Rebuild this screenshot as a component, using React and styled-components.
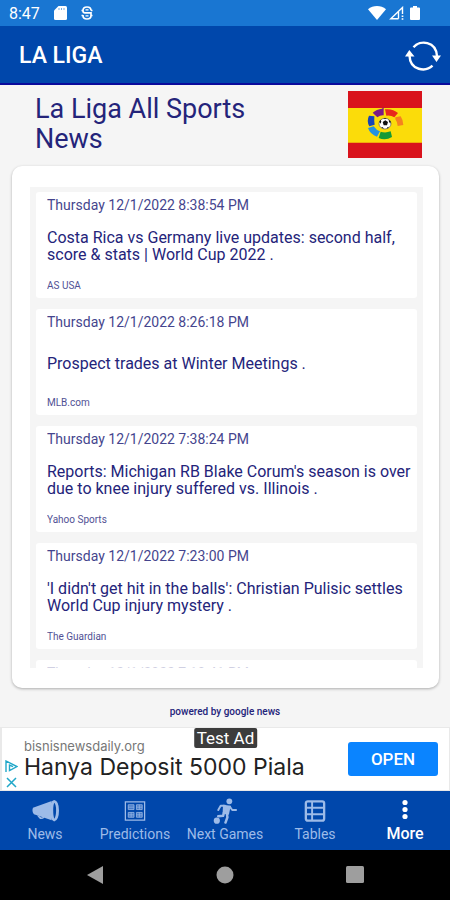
import React from "react"
import styled, { createGlobalStyle } from "styled-components"

const colors = {
  status: "#1976d2",
  primary: "#0047ab",
  primaryDark: "#0a0a9c",
  navy: "#24247a",
  page: "#f5f5f5",
  open: "#0a84ff",
  navIdle: "#9dbbe8",
}

const articles = [
  {
    date: "Thursday 12/1/2022 8:38:54 PM",
    title: "Costa Rica vs Germany live updates: second half, score & stats | World Cup 2022 .",
    source: "AS USA",
  },
  {
    date: "Thursday 12/1/2022 8:26:18 PM",
    title: "Prospect trades at Winter Meetings .",
    source: "MLB.com",
  },
  {
    date: "Thursday 12/1/2022 7:38:24 PM",
    title: "Reports: Michigan RB Blake Corum's season is over due to knee injury suffered vs. Illinois .",
    source: "Yahoo Sports",
  },
  {
    date: "Thursday 12/1/2022 7:23:00 PM",
    title: "'I didn't get hit in the balls': Christian Pulisic settles World Cup injury mystery .",
    source: "The Guardian",
  },
  {
    date: "Thursday 12/1/2022 7:10:41 PM",
    title: "",
    source: "",
  },
]

const GlobalStyle = createGlobalStyle`
  *,
  *::before,
  *::after {
    box-sizing: border-box;
  }

  body {
    margin: 0;
    background: ${colors.page};
    font-family: Roboto, "Liberation Sans", sans-serif;
  }
`

const Screen = styled.div`
  display: flex;
  flex-direction: column;
  height: 100vh;
  color: ${colors.navy};
  background: ${colors.page};
`

const StatusBar = styled.div`
  display: flex;
  align-items: center;
  justify-content: space-between;
  height: 26px;
  padding: 0 30px 0 9px;
  color: #fff;
  background: ${colors.status};
  font-size: 16px;
`

const StatusGroup = styled.div`
  display: flex;
  align-items: center;
  gap: ${props => props.$gap}px;
`

const Header = styled.header`
  display: flex;
  align-items: center;
  justify-content: space-between;
  height: 59px;
  padding: 2px 9px 0 19px;
  color: #fff;
  background: ${colors.primary};
  border-bottom: 2px solid ${colors.primaryDark};
`

const AppName = styled.h1`
  margin: 0;
  font-size: 23px;
  font-weight: 500;
`

const IconButton = styled.button`
  display: flex;
  padding: 0;
  border: 0;
  color: inherit;
  background: none;
`

const Main = styled.main`
  display: flex;
  flex: 1;
  flex-direction: column;
  min-height: 0;
`

const Intro = styled.section`
  display: flex;
  align-items: flex-start;
  justify-content: space-between;
  gap: 24px;
  padding: 6px 28px 8px 35px;
`

const Heading = styled.h2`
  max-width: 250px;
  margin: 3px 0 0;
  font-size: 27px;
  font-weight: 400;
  line-height: 30px;
`

const Card = styled.section`
  display: flex;
  flex: 1;
  min-height: 0;
  margin: 0 11px 0 12px;
  padding: 21px 16px 20px 18px;
  border-radius: 10px;
  background: #fff;
  box-shadow: 0 1px 3px rgba(0, 0, 0, 0.3);
`

const ListFrame = styled.div`
  position: relative;
  flex: 1;
  overflow: hidden;
  background: ${colors.page};

  &::after {
    position: absolute;
    right: 6px;
    bottom: 0;
    left: 6px;
    height: 8px;
    background: linear-gradient(rgba(255, 255, 255, 0), rgba(255, 255, 255, 0.8));
    content: "";
  }
`

const List = styled.ul`
  display: flex;
  flex-direction: column;
  gap: 11px;
  margin: 0;
  padding: 5px 6px;
  list-style: none;
`

const Article = styled.li`
  display: flex;
  flex-direction: column;
  flex-shrink: 0;
  height: 106px;
  padding: 5px 6px 5px 11px;
  border-radius: 3px;
  background: #fff;
`

const ArticleDate = styled.time`
  font-size: 14px;
  line-height: 16px;
  opacity: 0.85;
`

const ArticleTitle = styled.h3`
  display: flex;
  flex: 1;
  align-items: center;
  margin: 0;
  font-size: 16px;
  font-weight: 400;
  line-height: 17px;
`

const ArticleSource = styled.span`
  font-size: 10px;
  line-height: 14px;
  opacity: 0.8;
`

const Powered = styled.p`
  margin: 0;
  padding: 18px 0 9px;
  font-size: 10px;
  font-weight: 500;
  line-height: 12px;
  text-align: center;
`

const Ad = styled.aside`
  position: relative;
  display: flex;
  align-items: center;
  height: 64px;
  padding: 0 11px 0 3px;
  border: solid #e9e9e9;
  border-width: 1px 1px 1px 2px;
  background: #fff;
`

const AdMarks = styled.div`
  display: flex;
  flex-direction: column;
  align-self: flex-end;
  gap: 4px;
  margin-right: 6px;
  padding-bottom: 2px;
`

const AdCopy = styled.div`
  flex: 1;
  font-family: Inter, Lato, sans-serif;
  white-space: nowrap;
`

const AdSite = styled.div`
  color: #777;
  font-size: 13px;
  line-height: 16px;
`

const AdTitle = styled.div`
  color: #222;
  font-size: 23px;
  line-height: 26px;
`

const TestBadge = styled.span`
  position: absolute;
  top: 0;
  left: 50%;
  padding: 0 3px;
  border-radius: 2px;
  color: #fff;
  background: #3c3c3c;
  font-size: 17px;
  line-height: 20px;
  transform: translateX(-50%);
`

const OpenButton = styled.button`
  width: 90px;
  height: 34px;
  padding: 0;
  border: 0;
  border-radius: 3px;
  color: #fff;
  background: ${colors.open};
  font-family: inherit;
  font-size: 17px;
  font-weight: 500;
`

const TabBar = styled.nav`
  display: grid;
  grid-template-columns: repeat(5, 1fr);
  height: 59px;
  background: ${colors.primary};
`

const Tab = styled.a`
  display: flex;
  flex-direction: column;
  align-items: center;
  gap: 2px;
  padding-top: 7px;
  color: ${props => (props.$active ? "#fff" : colors.navIdle)};
  font-size: ${props => (props.$active ? 16 : 14)}px;
  font-weight: ${props => (props.$active ? 500 : 400)};
  line-height: 16px;
  text-decoration: none;
  white-space: nowrap;
`

const SystemBar = styled.div`
  display: grid;
  grid-template-columns: repeat(3, 130px);
  align-items: center;
  justify-content: center;
  justify-items: center;
  height: 50px;
  color: #9e9e9e;
  background: #000;
`

const SdCardIcon = () => (
  <svg width="13" height="14" viewBox="0 0 13 14" fill="currentColor">
    <path d="M4.5 0H11.5Q13 0 13 1.5V12.5Q13 14 11.5 14H1.5Q0 14 0 12.500V4.500Z" />
    <path d="M5 2v2M7.500 2v2M10 2v2" stroke={colors.status} strokeWidth="0.600" />
  </svg>
)

const DebugIcon = () => (
  <svg width="12" height="14" viewBox="0 0 12 14" fill="none" stroke="currentColor">
    <path
      d="M10 4.500C10 2 8.500 1 6 1S2 2 2 4.500V5Q2 6.800 4 6.800H10V9.500C10 12 8.500 13 6 13S2 12 2 9.500V9"
      strokeWidth="1.700"
    />
    <path d="M0.500 9.500H2M0.500 4.500H2M10 4.500h1.500M10 9.500h1.500M4.500 3.800h3M4.500 9.800h3" strokeWidth="1.300" />
  </svg>
)

const WifiIcon = () => (
  <svg width="18" height="14" viewBox="0 0 18 14" fill="currentColor">
    <path d="M0 3.300C5-1.100 13-1.100 18 3.300L9 14Z" />
  </svg>
)

const SignalIcon = () => (
  <svg width="15" height="14" viewBox="0 0 15 14" fill="none" stroke="currentColor">
    <path d="M9.500 12.800H1.800L13.500 1.500V8M9.500 12.800V6" strokeWidth="1.400" />
    <path d="M13.500 9.500v1.500M13.500 12.200v1.500" strokeWidth="1.700" />
  </svg>
)

const BatteryIcon = () => (
  <svg width="10" height="14" viewBox="0 0 10 14" fill="currentColor">
    <path d="M3 0h4v1.500h2Q10 1.500 10 2.500V13Q10 14 9 14H1Q0 14 0 13V2.500Q0 1.500 1 1.500H3Z" />
  </svg>
)

const SyncIcon = () => (
  <svg width="36" height="30" viewBox="0 0 36 30" fill="none">
    <g stroke="currentColor" strokeWidth="2.400">
      <path d="M8.500 6.300C15-1.500 31 0 32 15" />
      <path d="M27.500 24.700C21 31 5 30 4.500 14.500" />
    </g>
    <path d="M0 15.500L4.300 9L9.500 15.500ZM27 14.500H36L31.500 21Z" fill="currentColor" />
  </svg>
)

const LeagueFlag = () => (
  <svg width="74" height="67" viewBox="0 0 222 201" role="img" aria-label="La Liga">
    <path fill="#d9131c" d="M0 0h222v201H0z" />
    <path fill="#fbdc0a" d="M0 51h222v104H0z" />
    <path fill="#7b1a86" d="M74 65Q86 54 102 53L107 48V73Q97 72 88 79Z" />
    <path fill="#e8291c" d="M111 55Q134 52 150 66L139 79Q128 72 115 74Z" />
    <path fill="#f58220" d="M142 79L158 76Q166 88 166 102L149 105Q148 92 142 85Z" />
    <path fill="#1745b8" d="M63 74L79 76Q78 92 80 101L64 106Q55 90 63 74Z" />
    <path fill="#2491e0" d="M60 111L77 106Q85 118 96 121L87 137Q67 131 60 111Z" />
    <path fill="#159a36" d="M98 122Q112 127 128 121L132 138Q112 150 92 141Z" />
    <ellipse cx="111" cy="98" rx="18" ry="16" fill="#fff" stroke="#555" strokeWidth="2" />
    <path
      fill="#111"
      d="M104 93l8-5 8 5-3 10h-10zM94 92l4-6 2 6-3 6zM122 86l6 5-1 7-4-6zM99 108l6 1 2 5zM124 107l-6 2-2 5zM106 82h10l-5 3z"
    />
  </svg>
)

const AdChoicesIcon = () => (
  <svg width="13" height="13" viewBox="0 0 13 13" fill="none" stroke="#20a7c9">
    <path d="M1 12V1L12 6.500L4.500 10.500V5L8 6.700" strokeWidth="1.400" />
  </svg>
)

const AdCloseIcon = () => (
  <svg width="13" height="11" viewBox="0 0 13 11" fill="none" stroke="#20a7c9">
    <path d="M2 1L11 10M11 1L2 10" strokeWidth="1.500" />
  </svg>
)

const MegaphoneIcon = () => (
  <svg width="29" height="26" viewBox="0 0 29 27" fill="currentColor">
    <path d="M1.500 10L21 3Q18.500 12 21 23L2.500 17Q0 13.500 1.500 10Z" />
    <path d="M5.500 18L8 21Q10 23 13.500 20.500L12.500 19.500Q10 21 8.500 19Z" />
    <path
      fillRule="evenodd"
      d="M23.500 2Q28.500 3 28.500 13T23.500 24.500Q19 23 19 13T23.500 2ZM23.700 5Q22.500 7 22.500 13T23.700 21.500Q25.500 19 25.500 13T23.700 5Z"
    />
  </svg>
)

const PredictionsIcon = () => (
  <svg width="22" height="26" viewBox="0 0 22 27" fill="none" stroke="currentColor">
    <path d="M1 4h20v19H1z" strokeWidth="1.300" />
    <path d="M4 7h6v5H4zM12.500 7h6v5h-6zM4 15h6v5H4zM12.500 15h6v5h-6z" fill="currentColor" fillOpacity="0.450" strokeWidth="0.800" />
    <path d="M4 9.500h6M12.500 9.500h6M4 17.500h6M12.500 17.500h6M7 15v5M15.500 7v5M15.500 15v5" strokeWidth="0.700" />
  </svg>
)

const PlayerIcon = () => (
  <svg width="26" height="26" viewBox="0 0 26 27" fill="none" stroke="currentColor">
    <circle cx="17.500" cy="3.500" r="3" fill="currentColor" stroke="none" />
    <circle cx="4.500" cy="23.500" r="3.200" fill="currentColor" stroke="none" />
    <path d="M11 7L19 8L17 17.500L10.500 16Z" fill="currentColor" stroke="none" />
    <g strokeLinecap="round" strokeLinejoin="round" strokeWidth="2">
      <path d="M13 8L8.500 8L6 12.500M18 9L20.500 12.500L24.500 12.500" />
      <path d="M12 15L11 18.500L6 19M15 16.500L15.500 20L13.500 25.500" strokeWidth="2.600" />
    </g>
  </svg>
)

const TablesIcon = () => (
  <svg width="22" height="26" viewBox="0 0 22 27" fill="none" stroke="currentColor">
    <rect x="1.500" y="3.500" width="19" height="20" rx="2" strokeWidth="2.400" />
    <path d="M2 10.200h18M2 16.800h18M8 4v19" strokeWidth="2" />
  </svg>
)

const MoreIcon = () => (
  <svg width="8" height="26" viewBox="0 0 8 26" fill="currentColor">
    <circle cx="4" cy="4.500" r="2.600" />
    <circle cx="4" cy="11.500" r="2.600" />
    <circle cx="4" cy="18.500" r="2.600" />
  </svg>
)

const tabs = [
  { label: "News", icon: MegaphoneIcon },
  { label: "Predictions", icon: PredictionsIcon },
  { label: "Next Games", icon: PlayerIcon },
  { label: "Tables", icon: TablesIcon },
  { label: "More", icon: MoreIcon, active: true },
]

const App = () => (
  <Screen>
    <GlobalStyle />
    <StatusBar>
      <StatusGroup $gap={14}>
        <span>8:47</span>
        <SdCardIcon />
        <DebugIcon />
      </StatusGroup>
      <StatusGroup $gap={3}>
        <WifiIcon />
        <SignalIcon />
        <span />
        <BatteryIcon />
      </StatusGroup>
    </StatusBar>
    <Header>
      <AppName>LA LIGA</AppName>
      <IconButton type="button" aria-label="Refresh">
        <SyncIcon />
      </IconButton>
    </Header>
    <Main>
      <Intro>
        <Heading>La Liga All Sports News</Heading>
        <LeagueFlag />
      </Intro>
      <Card>
        <ListFrame>
          <List>
            {articles.map(({ date, title, source }) => (
              <Article key={date}>
                <ArticleDate>{date}</ArticleDate>
                <ArticleTitle>{title}</ArticleTitle>
                <ArticleSource>{source}</ArticleSource>
              </Article>
            ))}
          </List>
        </ListFrame>
      </Card>
      <Powered>powered by google news</Powered>
    </Main>
    <Ad>
      <AdMarks>
        <AdChoicesIcon />
        <AdCloseIcon />
      </AdMarks>
      <AdCopy>
        <AdSite>bisnisnewsdaily.org</AdSite>
        <AdTitle>Hanya Deposit 5000 Piala</AdTitle>
      </AdCopy>
      <OpenButton type="button">OPEN</OpenButton>
      <TestBadge>Test Ad</TestBadge>
    </Ad>
    <TabBar>
      {tabs.map(({ label, icon: Icon, active }) => (
        <Tab key={label} href="#" $active={active}>
          <Icon />
          {label}
        </Tab>
      ))}
    </TabBar>
    <SystemBar>
      <svg width="18" height="18" viewBox="0 0 18 18" fill="currentColor">
        <path d="M1 9L17 0V18Z" />
      </svg>
      <svg width="18" height="18" viewBox="0 0 18 18" fill="currentColor">
        <circle cx="9" cy="9" r="8.500" />
      </svg>
      <svg width="18" height="18" viewBox="0 0 18 18" fill="currentColor">
        <rect width="18" height="17" rx="1.500" />
      </svg>
    </SystemBar>
  </Screen>
)

export default App
